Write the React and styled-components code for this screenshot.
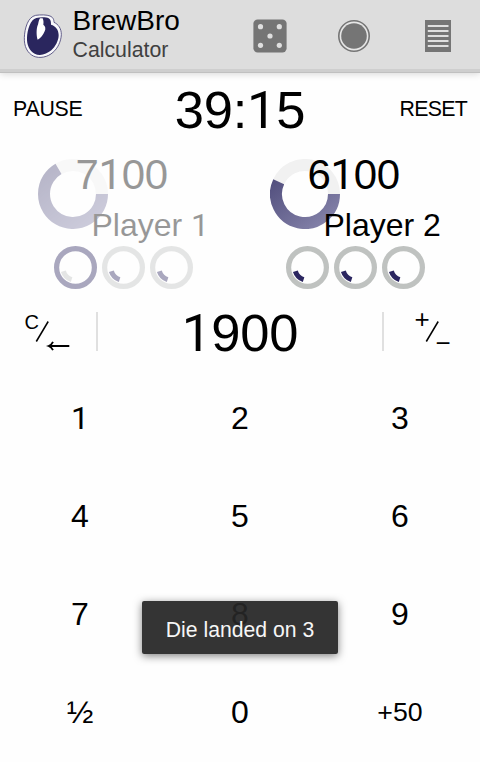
import { useState } from 'react';
import styled, { createGlobalStyle } from 'styled-components';

const KEYS = ['1', '2', '3', '4', '5', '6', '7', '8', '9', '½', '0', '+50'];

const PLAYERS = [
  { name: 'Player 1', score: '7100', angle: 240, rounds: [true, false, false] },
  { name: 'Player 2', score: '6100', angle: 205, rounds: [false, false, false] },
];

const arc = (c, r, from, to) => {
  const point = (deg) => {
    const rad = (deg * Math.PI) / 180;
    return `${c + r * Math.cos(rad)} ${c + r * Math.sin(rad)}`;
  };
  return `M${point(from)} A${r} ${r} 0 ${to - from > 180 ? 1 : 0} 1 ${point(to)}`;
};

// the plain "1" without a foot comes from another family
const Figures = ({ children }) =>
  children.split(/(1)/).map((part, i) => (part === '1' ? <One key={i}>1</One> : part));

const Logo = () => (
  <LogoMark width="40" height="46" viewBox="70 38 120 138">
    <path
      d="M108 45 C122 43 142 43 151 47 C161 51 163 59 163 66 C176 72 185 84 185 103 C184 124 174 144 160 156 C145 170 120 176 101 167 C83 158 73 138 74 112 C75 85 84 50 108 45 Z"
      fill="#f8f8fb" stroke="#4b477a" strokeWidth="2.6"
    />
    <path
      d="M110 53 C122 50 140 50 147 54 C154 58 154 66 154 73 C168 77 177 88 177 104 C177 121 167 139 155 150 C141 162 120 168 105 160 C89 151 81 133 82 112 C83 89 92 57 110 53 Z"
      fill="#2a265e"
    />
    <path
      d="M121 54 L129 54 C132 61 132 67 131 73 C137 77 139 85 135 93 C131 103 123 114 114 118 C110 108 110 88 113 78 C117 70 116 60 121 54 Z"
      fill="#fff"
    />
  </LogoMark>
);

const DieIcon = () => (
  <svg width="34" height="34" viewBox="0 0 34 34">
    <rect x="0.4" y="0.4" width="33.2" height="33" rx="4.2" fill="#757575" />
    {[[7.5, 7.7], [26.3, 7.7], [17, 17], [7.5, 26.3], [26.3, 26.3]].map(([x, y]) => (
      <circle key={`${x}-${y}`} cx={x} cy={y} r="2.6" fill="#dfdfdf" />
    ))}
  </svg>
);

const CoinIcon = () => (
  <svg width="34" height="34" viewBox="0 0 34 34">
    <circle cx="17" cy="17" r="15.2" fill="#e6e6e6" stroke="#757575" strokeWidth="1.6" />
    <circle cx="17" cy="17" r="12.8" fill="#757575" />
  </svg>
);

const NotesIcon = () => (
  <svg width="34" height="34" viewBox="0 0 34 34">
    <rect x="4" y="1" width="26" height="32" fill="#757575" />
    <path d="M6.8 7H27.5M6.8 12H27.5M6.8 17H27.5M6.8 22H27.5M6.8 27H27.5" stroke="#dfdfdf" strokeWidth="1.9" />
  </svg>
);

const LifeRing = ({ angle, id }) => (
  <Life width="70" height="70" viewBox="0 0 70 70">
    <defs>
      <linearGradient id={id} gradientUnits="userSpaceOnUse" x1="10" y1="10" x2="54" y2="68">
        <stop offset="0" stopColor="#4f4c7b" />
        <stop offset="1" stopColor="#8482a9" />
      </linearGradient>
    </defs>
    <path d={arc(35, 29, angle, 360)} fill="none" stroke="#f1f1f1" strokeWidth="12" />
    <path d={arc(35, 29, 0, angle)} fill="none" stroke={`url(#${id})`} strokeWidth="12" />
  </Life>
);

const RoundRing = ({ won }) => (
  <svg width="43" height="43" viewBox="0 0 43 43">
    <circle cx="21.5" cy="21.5" r="18.9" fill="none" stroke={won ? '#2b2660' : '#bfc2c0'} strokeWidth="5.2" />
    <path d={arc(21.5, 12.7, 108, 163)} fill="none" stroke={won ? '#bfc2c0' : '#2b2660'} strokeWidth="5" />
  </svg>
);

const App = () => {
  const [active] = useState('Player 2');

  return (
    <Screen>
      <GlobalStyle />
      <Header>
        <Logo />
        <Titles>
          <AppName>BrewBro</AppName>
          <SubTitle>Calculator</SubTitle>
        </Titles>
        <Actions>
          <DieIcon />
          <CoinIcon />
          <NotesIcon />
        </Actions>
      </Header>

      <TimerRow>
        <TextButton>PAUSE</TextButton>
        <BigNumber><Figures>39:15</Figures></BigNumber>
        <TextButton $right>RESET</TextButton>
      </TimerRow>

      <Players>
        {PLAYERS.map((player, i) => (
          <Player key={player.name} $dim={player.name !== active}>
            <Summary>
              <LifeRing angle={player.angle} id={`life${i}`} />
              <PlayerText>
                <Score><Figures>{player.score}</Figures></Score>
                <Name><Figures>{player.name}</Figures></Name>
              </PlayerText>
            </Summary>
            <Rounds>
              {player.rounds.map((won, n) => <RoundRing key={n} won={won} />)}
            </Rounds>
          </Player>
        ))}
      </Players>

      <EntryRow>
        <SideKey>
          <svg width="96" height="60" viewBox="0 302 96 60">
            <text x="24.5" y="329.2" fontSize="20">C</text>
            <path d="M36.3 341.5L48.2 321.5" stroke="#000" strokeWidth="1.5" />
            <path d="M49 346H69.3M53 341.8C52 344 50.5 345.3 48.6 346C50.5 346.7 52 348 53 350.2" fill="none" stroke="#000" strokeWidth="1.8" />
          </svg>
        </SideKey>
        <BigNumber><Figures>1900</Figures></BigNumber>
        <SideKey $right>
          <svg width="96" height="60" viewBox="384 302 96 60">
            <text x="414.5" y="328.2" fontSize="26">+</text>
            <path d="M426.3 341.5L438.2 321.5" stroke="#000" strokeWidth="1.5" />
            <text x="435.5" y="352.4" fontSize="26">−</text>
          </svg>
        </SideKey>
      </EntryRow>

      <Keypad>
        {KEYS.map((key) => (
          <Key key={key} $small={key.length > 1}><Figures>{key}</Figures></Key>
        ))}
      </Keypad>

      <Toast>Die landed on 3</Toast>
    </Screen>
  );
};

const GlobalStyle = createGlobalStyle`
  body {
    margin: 0;
    background-color: #fefefe;
  }
`;

const Screen = styled.div`
  position: relative;
  width: 480px;
  height: 762px;
  overflow: hidden;
  background-color: #fefefe;
  color: #000;
  font-family: "Liberation Sans", Arial, sans-serif;
`;

const One = styled.span`
  font-family: Roboto, "Liberation Sans", sans-serif;
`;

const Header = styled.header`
  display: flex;
  align-items: center;
  height: 72px;
  padding: 0 25px 0 23px;
  box-sizing: border-box;
  background-color: #ddd;
  border-bottom: 3px solid #cecece;
  box-shadow: 0 1px 0 #c0c0c0, 0 2px 7px rgba(0, 0, 0, 0.16);
`;

const LogoMark = styled.svg`
  margin-top: 2px;
`;

const Titles = styled.div`
  margin: 2px 0 0 9.5px;
`;

const AppName = styled.div`
  font-size: 28px;
  line-height: 28px;
`;

const SubTitle = styled.div`
  color: #404040;
  font-size: 21.3px;
  line-height: 30px;
`;

const Actions = styled.div`
  display: flex;
  gap: 50px;
  margin: 3px 0 0 auto;
`;

const TimerRow = styled.div`
  display: grid;
  grid-template-columns: 100px 1fr 100px;
  align-items: center;
  height: 74px;
  padding: 0 13px;
`;

const TextButton = styled.button`
  padding: 0;
  border: none;
  background: none;
  color: #000;
  font-family: inherit;
  font-size: 21.3px;
  letter-spacing: ${(props) => (props.$right ? '-0.7px' : '-0.2px')};
  text-align: ${(props) => (props.$right ? 'right' : 'left')};
`;

const BigNumber = styled.div`
  padding-top: 2px;
  font-size: 52.5px;
  line-height: 60px;
  letter-spacing: -0.2px;
  text-align: center;
`;

const Players = styled.div`
  display: flex;
  height: 150px;
  padding: 13px 0 0 38px;
  box-sizing: border-box;
`;

const Player = styled.div`
  width: 232px;
  flex-shrink: 0;
  opacity: ${(props) => (props.$dim ? 0.4 : 1)};
`;

const Summary = styled.div`
  display: grid;
  height: 87px;
`;

const Life = styled.svg`
  grid-area: 1 / 1;
`;

const PlayerText = styled.div`
  grid-area: 1 / 1;
`;

const Score = styled.div`
  padding: 1px 0 0 37.5px;
  font-size: 42px;
  line-height: 30px;
  letter-spacing: -0.4px;
`;

const Name = styled.div`
  margin-top: 15px;
  padding-left: 53.5px;
  font-size: 32px;
  line-height: 40px;
`;

const Rounds = styled.div`
  display: flex;
  gap: 5px;
  padding-left: 15.5px;
`;

const EntryRow = styled.div`
  display: grid;
  grid-template-columns: 98px 1fr 98px;
  align-items: center;
  height: 73px;
  padding-bottom: 2px;
  box-sizing: border-box;
`;

const SideKey = styled.div`
  display: flex;
  align-items: center;
  justify-content: ${(props) => (props.$right ? 'flex-end' : 'flex-start')};
  height: 39px;
  box-sizing: border-box;
  border-left: ${(props) => (props.$right ? '2px solid #e0e0e0' : 'none')};
  border-right: ${(props) => (props.$right ? 'none' : '2px solid #e0e0e0')};
`;

const Keypad = styled.div`
  display: grid;
  grid-template-columns: repeat(3, 160px);
  grid-auto-rows: 98px;
`;

const Key = styled.button`
  padding: 0;
  border: none;
  background: none;
  color: #000;
  font-family: inherit;
  font-size: ${(props) => (props.$small ? '26.7px' : '32px')};
`;

const Toast = styled.div`
  position: absolute;
  top: 601px;
  left: 142px;
  width: 196px;
  height: 53px;
  border-radius: 2px;
  background-color: rgba(37, 37, 37, 0.935);
  box-shadow: 0 2px 8px rgba(0, 0, 0, 0.5);
  color: #f6f6f6;
  font-size: 21.2px;
  line-height: 57px;
  text-align: center;
`;

export default App;
